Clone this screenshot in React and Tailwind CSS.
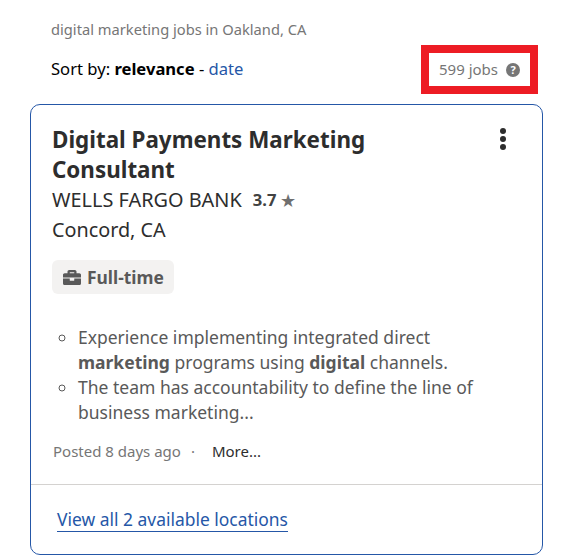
import React from "react";

const Briefcase = () => (
  <svg width="18" height="15" viewBox="0 32 512 448" preserveAspectRatio="none" className="shrink-0" fill="#595959">
    <path d="M320 336c0 8.840-7.160 16-16 16h-96c-8.840 0-16-7.160-16-16v-48H0v144c0 25.600 22.400 48 48 48h416c25.600 0 48-22.400 48-48V288H320v48zm144-208h-80V80c0-25.600-22.400-48-48-48H176c-25.600 0-48 22.400-48 48v48H48c-25.600 0-48 22.400-48 48v80h512v-80c0-25.600-22.400-48-48-48zm-144 0H192V96h128v32z" />
  </svg>
);

export default function App() {
  return (
    <div className="w-[571px] h-[558px] bg-white overflow-hidden font-['Noto_Sans',sans-serif] pt-[19px] pl-[30px] pr-[28px]">
      <div className="pl-[21px] text-[14.7px] leading-[20px] text-[#767676]">digital marketing jobs in Oakland, CA</div>
      <div className="flex items-center justify-between h-[49px] mt-[6px] pl-[21px]">
        <div className="text-[16.6px] text-black">
          <span>Sort by: </span><b className="font-bold">relevance</b><span> - </span><span className="text-[#2557a7]">date</span>
        </div>
        <div className="flex items-center justify-center gap-[8px] w-[117px] h-[49px] border-[8px] border-[#ed1c24] text-[15px] text-[#767676] mr-[5px]">
          <span>599 jobs</span>
          <svg width="14" height="14" viewBox="0 0 14 14">
            <circle cx="7" cy="7" r="7" fill="#767676" />
            <text x="7" y="10.8" textAnchor="middle" fontSize="11" fontWeight="700" fill="#fff" fontFamily="Noto Sans">?</text>
          </svg>
        </div>
      </div>
      <div className="mt-[10px] w-[513px] h-[451px] border border-[#2557a7] rounded-[10px] flex flex-col">
        <div className="relative px-[21px] pt-[20px] flex-1">
          <svg className="absolute right-[35px] top-[22px]" width="8" height="24" viewBox="0 0 8 24" fill="#2d2d2d">
            <circle cx="4" cy="4" r="3" /><circle cx="4" cy="12" r="3" /><circle cx="4" cy="20" r="3" />
          </svg>
          <h2 className="text-[22.4px] leading-[30px] font-bold text-[#2d2d2d] w-[400px]">Digital Payments Marketing Consultant</h2>
          <div className="flex items-center text-[19.9px] leading-[30px] text-[#2d2d2d]">
            <span>WELLS FARGO BANK</span>
            <span className="ml-[11px] text-[16.6px] font-bold text-[#424242]">3.7</span>
            <span className="ml-[4px] text-[18px] text-[#6f6f6f]">★</span>
          </div>
          <div className="text-[19.8px] leading-[30px] text-[#2d2d2d]">Concord, CA</div>
          <div className="mt-[15px] inline-flex items-center gap-[6px] h-[34px] pl-[11px] rounded-[6px] bg-[#f3f2f1] text-[17.4px] font-bold text-[#595959] w-[122px] whitespace-nowrap">
            <Briefcase />
            <span>Full-time</span>
          </div>
          <ul className="mt-[31px] pl-[26px] list-[circle] text-[17.5px] leading-[25px] text-[#595959] marker:text-[#595959]">
            <li>Experience implementing integrated direct <b className="font-bold">marketing</b> programs using <b className="font-bold">digital</b> channels.</li>
            <li>The team has accountability to define the line of business marketing...</li>
          </ul>
          <div className="mt-[16px] pl-[1px] flex items-center text-[15px] leading-[20px]">
            <span className="text-[#767676]">Posted 8 days ago</span>
            <span className="ml-[10px] text-[#767676]">·</span>
            <span className="ml-[17px] text-[#2d2d2d]">More...</span>
          </div>
        </div>
        <div className="border-t border-[#d4d2d0] h-[70px] px-[26px] pt-[23px]">
          <span className="text-[17.45px] text-[#2557a7] border-b border-[#2557a7] inline-block leading-[23px]">View all 2 available locations</span>
        </div>
      </div>
    </div>
  );
}
